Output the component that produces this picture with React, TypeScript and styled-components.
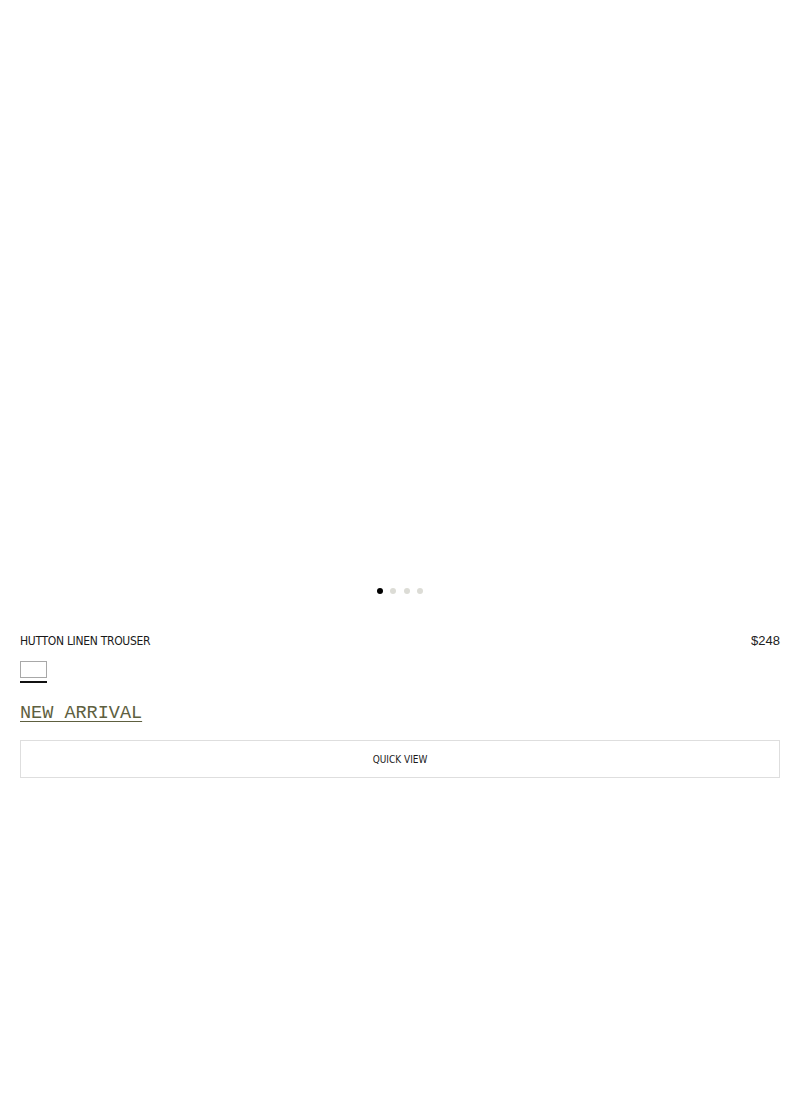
import styled, { createGlobalStyle } from "styled-components";

const GlobalStyle = createGlobalStyle`
  html, body {
    margin: 0;
    padding: 0;
    background: #fff;
  }
  body {
    font-family: "Liberation Sans", Arial, sans-serif;
    color: #1a1a1a;
  }
`;

const slides = [0, 1, 2, 3];

export default function App() {
  return (
    <>
      <GlobalStyle />
      <Card>
        <ImageArea />
        <Dots>
          {slides.map((i) => (
            <Dot key={i} active={i === 0} />
          ))}
        </Dots>
        <Info>
          <TitleRow>
            <Title>HUTTON LINEN TROUSER</Title>
            <Price>$248</Price>
          </TitleRow>
          <Swatches>
            <Swatch selected />
          </Swatches>
          <Badge>NEW ARRIVAL</Badge>
          <QuickView type="button">QUICK VIEW</QuickView>
        </Info>
      </Card>
    </>
  );
}

const Card = styled.div`
  width: 800px;
  display: flex;
  flex-direction: column;
`;

const ImageArea = styled.div`
  height: 585px;
  background: #fff;
`;

const Dots = styled.div`
  display: flex;
  justify-content: center;
  gap: 7.5px;
  height: 11px;
  align-items: center;
`;

const Dot = styled.span<{ active: boolean }>`
  width: 6px;
  height: 6px;
  border-radius: 50%;
  background: ${(p) => (p.active ? "#000" : "#dcdcd6")};
`;

const Info = styled.div`
  padding: 0 20px;
  display: flex;
  flex-direction: column;
`;

const TitleRow = styled.div`
  display: flex;
  justify-content: space-between;
  align-items: center;
  margin-top: 36px;
  height: 16px;
`;

const Title = styled.div`
  font-family: "DejaVu Sans", sans-serif;
  font-stretch: condensed;
  font-size: 12px;
  letter-spacing: -0.3px;
  padding-top: 2px;
  color: #1a1a1a;
`;

const Price = styled.div`
  font-size: 13px;
  color: #222;
`;

const Swatches = styled.div`
  display: flex;
  gap: 8px;
  margin-top: 13px;
`;

const Swatch = styled.div<{ selected?: boolean }>`
  width: 27px;
  padding-bottom: 3px;
  border-bottom: 2px solid ${(p) => (p.selected ? "#111" : "transparent")};

  &::before {
    content: "";
    display: block;
    box-sizing: border-box;
    height: 17px;
    border: 1px solid #a8a8a8;
    background: #fff;
  }
`;

const Badge = styled.a`
  font-family: "Liberation Mono", "Courier New", monospace;
  font-size: 18.5px;
  color: #5e6040;
  text-decoration: underline;
  text-underline-offset: 3px;
  text-decoration-thickness: 1px;
  margin-top: 20px;
  align-self: flex-start;
  line-height: 22px;
`;

const QuickView = styled.button`
  margin-top: 15px;
  height: 38px;
  width: 100%;
  background: #fff;
  border: 1px solid #dedede;
  font-family: "DejaVu Sans", sans-serif;
  font-stretch: condensed;
  font-size: 10px;
  color: #1a1a1a;
  cursor: pointer;
`;
